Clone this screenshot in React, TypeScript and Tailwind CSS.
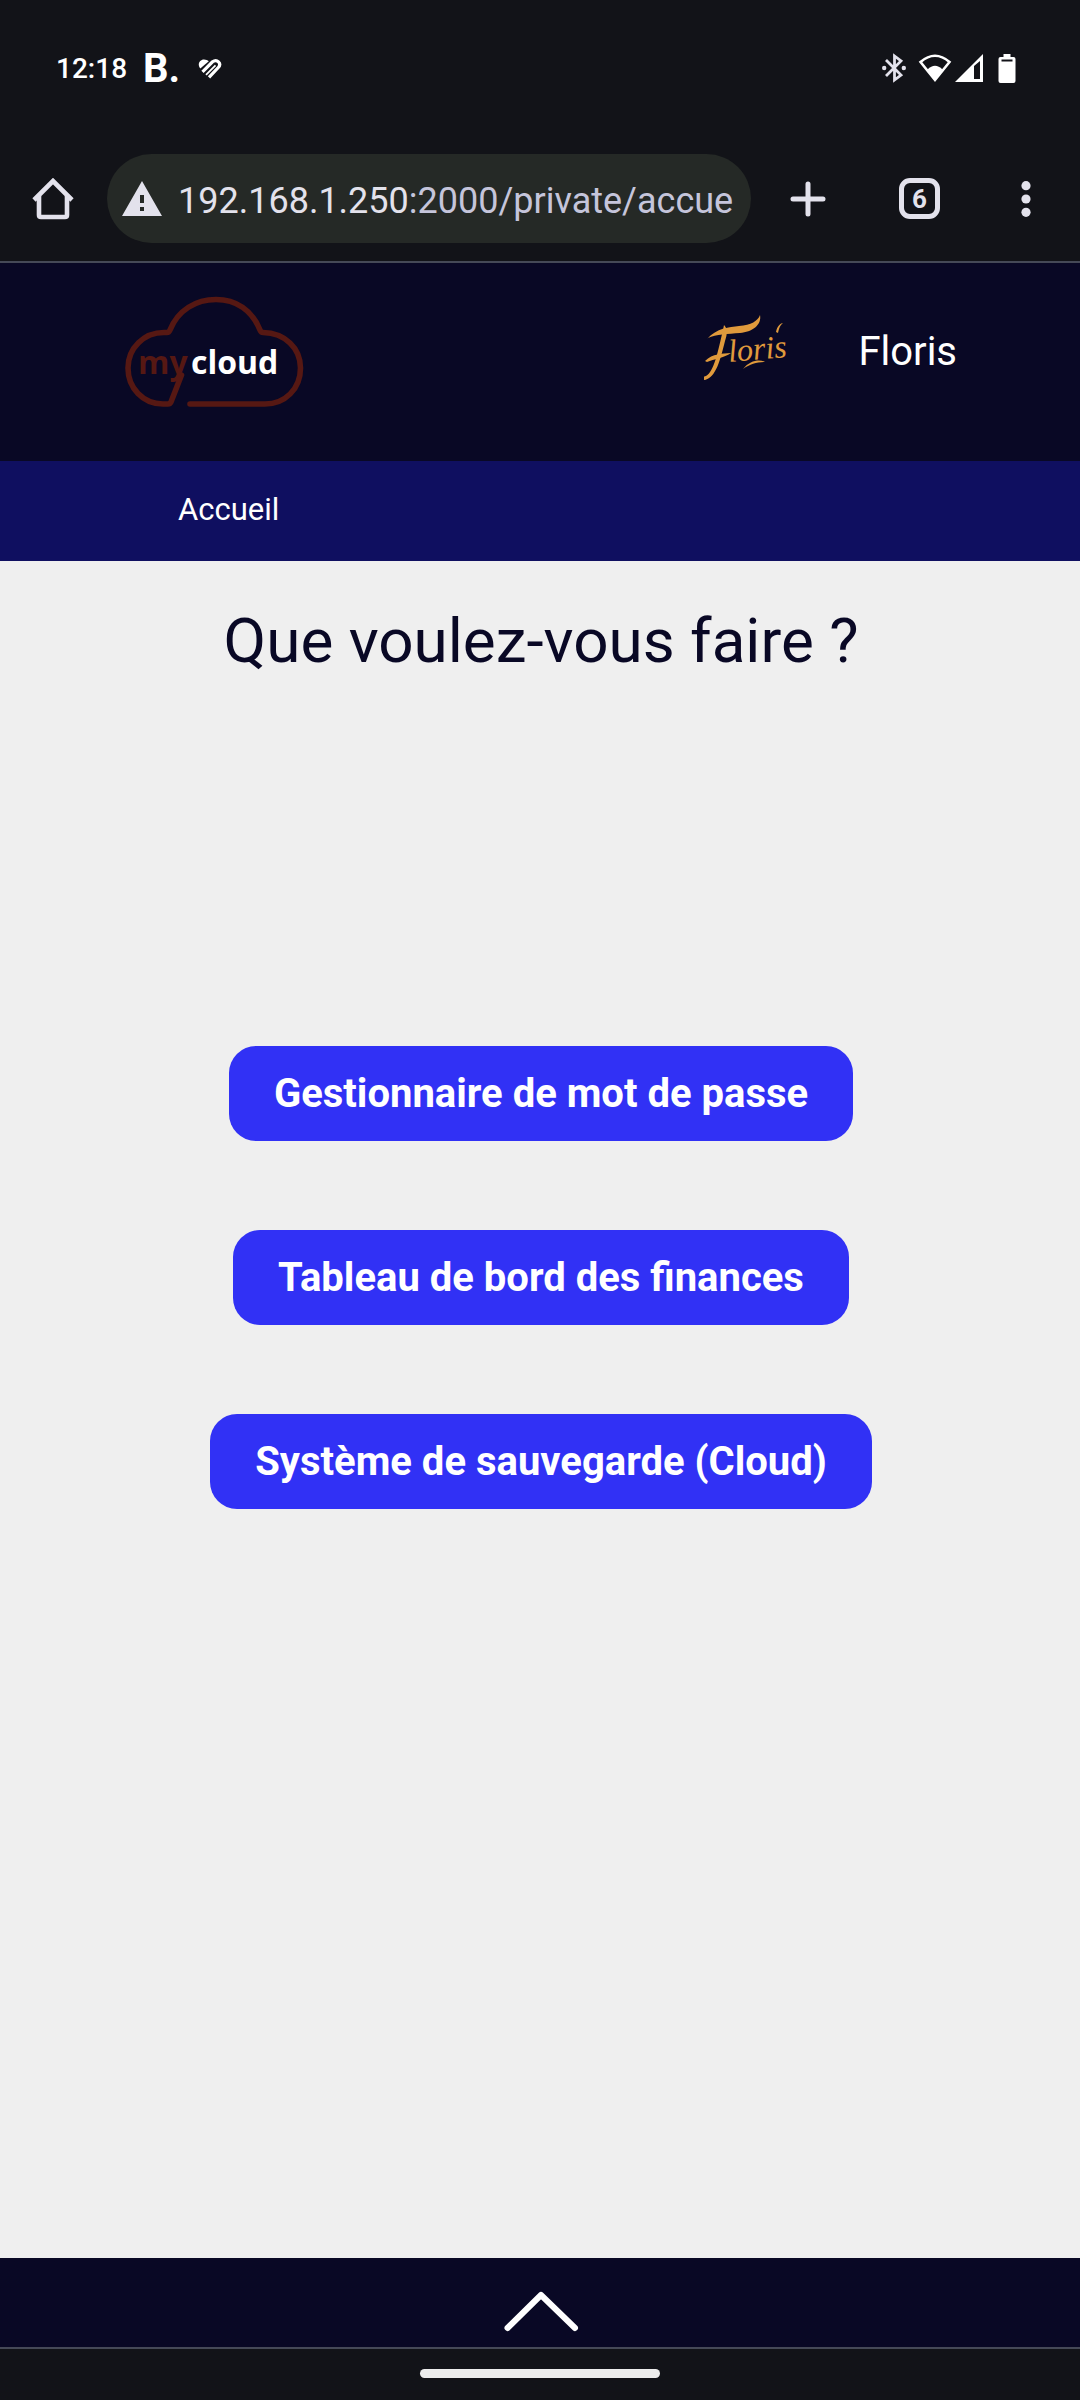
import React from "react";

function StatusBar() {
  return (
    <div className="flex h-[136px] items-center justify-between pl-[56px] pr-[64px] text-white">
      <div className="flex items-center pt-0.5">
        <time className="text-[28px] leading-9 font-medium">12:18</time>
        <span className="ml-4 text-[40px] leading-10 font-bold">B.</span>
        <svg className="ml-[18px] h-6 w-6" viewBox="0 0 24 24" fill="none" stroke="currentColor" aria-hidden="true">
          <path d="M2.300 11.500 C-1 7.500 1.500 2.500 6 2.500 C8 2.500 9.500 3.300 10.800 4.200Z" fill="currentColor" stroke="none" />
          <path d="M4.500 14.800 L14.500 4.800 C19 1.500 24 6.500 20.300 10.500 L11 20.300" strokeWidth="3.200" />
          <path d="M8 17.800 L17.500 8.300" strokeWidth="1.800" />
        </svg>
      </div>
      <div className="flex items-center">
        <svg className="h-[30px] w-[26px]" viewBox="0 0 26 30" fill="none" stroke="#e3e2ec" strokeWidth="2.800" aria-hidden="true">
          <path d="M4 7 L19 22 L12.500 27 V3 L19 8 L4 23" />
          <circle cx="2.200" cy="15" r="2.200" fill="#e3e2ec" stroke="none" />
          <circle cx="21.800" cy="15" r="2.200" fill="#e3e2ec" stroke="none" />
        </svg>
        <svg className="ml-2.5 h-[30px] w-[34px]" viewBox="0 0 34 30" aria-hidden="true">
          <path d="M2.500 9 Q17 -3.500 31.500 9 L17 27Z" fill="none" stroke="#fff" strokeWidth="2.600" />
          <path d="M9.500 16.500 Q17 9 24.500 16.500 L17 27.500Z" fill="#fff" />
        </svg>
        <svg className="ml-0.5 h-[30px] w-[30px]" viewBox="0 0 30 30" aria-hidden="true">
          <path fillRule="evenodd" d="M1 29 L29 1 V29Z M20 13 V26 H26 V8Z" fill="#fff" />
        </svg>
        <svg className="ml-3.5 h-[30px] w-[18px]" viewBox="0 0 18 30" aria-hidden="true">
          <path fillRule="evenodd" d="M5.500 1 H12.500 V4 H15.500 Q17.500 4 17.500 6 V28 Q17.500 30 15.500 30 H2.500 Q.5 30 .5 28 V6 Q.5 4 2.500 4 H5.500Z M3.500 6.500 V8.500 H14.500 V6.500Z" fill="#fff" />
        </svg>
      </div>
    </div>
  );
}

function BrowserToolbar() {
  return (
    <div className="flex h-[127px] items-center border-b-2 border-[#454957] pl-8 pr-[49px] text-[#e3e2ec]">
      <button type="button" aria-label="Page d'accueil" className="shrink-0">
        <svg className="h-[42px] w-[42px]" viewBox="0 0 42 42" fill="none" stroke="currentColor" strokeWidth="4.600" strokeLinejoin="round" aria-hidden="true">
          <path d="M2 22 L21 3 L40 22" strokeLinejoin="miter" />
          <path d="M7 18 V37 Q7 39 9 39 H33 Q35 39 35 37 V18" />
        </svg>
      </button>
      <div className="ml-[33px] flex h-[89px] min-w-0 flex-1 items-center rounded-full bg-[#252926] px-[14px]">
        <svg className="h-9 w-[42px] shrink-0" viewBox="0 0 42 36" aria-hidden="true">
          <path fillRule="evenodd" d="M21 0 L41 35 H1Z M19 14 V22 H23 V14Z M19 26 V30 H23 V26Z" fill="currentColor" />
        </svg>
        <div className="ml-[15px] flex-1 overflow-hidden pt-1 text-[36px] leading-[48px] whitespace-nowrap">
          192.168.1.250<span className="text-[#c5c5db]">:2000/private/accue</span>
        </div>
      </div>
      <button type="button" aria-label="Nouvel onglet" className="ml-[37px] shrink-0">
        <svg className="h-10 w-10" viewBox="0 0 40 40" stroke="currentColor" strokeWidth="5" strokeLinecap="round" aria-hidden="true">
          <path d="M20 5 V35 M5 20 H35" />
        </svg>
      </button>
      <button type="button" aria-label="6 onglets" className="ml-[71px] flex h-[41px] w-[41px] shrink-0 items-center justify-center rounded-[11px] border-[5px] border-current text-[26px] leading-7 font-bold">
        6
      </button>
      <button type="button" aria-label="Menu" className="ml-[81px] shrink-0">
        <svg className="h-10 w-[10px]" viewBox="0 0 10 40" fill="currentColor" aria-hidden="true">
          <circle cx="5" cy="6.700" r="4.600" />
          <circle cx="5" cy="20" r="4.600" />
          <circle cx="5" cy="33.300" r="4.600" />
        </svg>
      </button>
    </div>
  );
}

function CloudLogo() {
  return (
    <svg className="h-28 w-[180px]" viewBox="0 0 180 112" role="img" aria-label="mycloud">
      <g fill="none" stroke="#561813" strokeWidth="5.600" strokeLinecap="round" strokeLinejoin="round">
        <path d="M57.500 80 L47 107 Q46 109 44 109 H39 C19 109 4 93 4 73 C4 53 20 37.500 40 37.500 H43 Q45 37.500 46 35 C54 15 72 4.500 92 4.500 C112 4.500 128 15 136 35 Q137 37.500 139 37.500 C161 38 176.500 53 176.500 73 C176.500 94 161 109 141 109 H66" />
      </g>
      <text x="14" y="79" className="font-['Open_Sans'] text-[32px] font-bold" fill="#561813">
        my<tspan x="67" fill="#fff">cloud</tspan>
      </text>
    </svg>
  );
}

function SignatureLogo() {
  return (
    <svg className="h-[72px] w-[84px]" viewBox="0 0 84 72" role="img" aria-label="Floris">
      <g fill="#e09a3c">
        <path d="M3 24 C13 13 25 12 35 11 C47 10 54 6 56 0 C58 10 48 17 36 18 C24 19 12 19 4 23Z" />
        <path d="M20 10 C23 13 24 17 21 26 C16 46 12 62 1 65 C-2 65 -1 61 2 61 C10 57 14 36 19 15Z" />
        <path d="M1 46 C9 38 18 39 27 38 C20 43 10 44 3 47Z" />
        <path d="M39 54 C46 45 56 44 61 47 C53 47 46 49 39 54Z" />
        <path d="M72 17 C73 11 77 8 79 8 C75 11 75 15 74 18Z" />
      </g>
      <text x="25" y="47" transform="rotate(-5 25 47)" className="font-['Liberation_Serif'] text-[32px] italic" fill="#e09a3c">loris</text>
    </svg>
  );
}

const services = [
  { label: "Gestionnaire de mot de passe", href: "#mots-de-passe" },
  { label: "Tableau de bord des finances", href: "#finances" },
  { label: "Système de sauvegarde (Cloud)", href: "#cloud" },
];

export default function App() {
  return (
    <div className="flex min-h-screen flex-col bg-[#121318] font-[Roboto,sans-serif]">
      <StatusBar />
      <BrowserToolbar />
      <header>
        <div className="flex items-center justify-between bg-[#090825] pt-8 pr-[123px] pb-[54px] pl-[124px]">
          <a href="#accueil"><CloudLogo /></a>
          <a href="#profil" className="flex items-center gap-[70px] text-[40px] leading-[50px] text-white">
            <SignatureLogo />
            <span className="pt-0.5">Floris</span>
          </a>
        </div>
        <nav className="flex h-[100px] items-center bg-[#0f0f60] pb-0.5 pl-[178px]">
          <a href="#accueil" className="text-[31px] leading-9 text-white">Accueil</a>
        </nav>
      </header>
      <main className="flex flex-1 flex-col items-center bg-[#efefef] pt-10 pl-0.5">
        <h1 className="text-[62px] leading-[80px] text-[#090825]">Que voulez-vous faire ?</h1>
        <div className="mt-[365px] flex flex-col items-center gap-[89px]">
          {services.map((service) => (
            <a key={service.href} href={service.href} className="rounded-[27px] bg-[#3131f5] px-[45px] py-6 text-[40px] leading-[47px] font-bold text-white">
              {service.label}
            </a>
          ))}
        </div>
      </main>
      <footer className="flex h-[91px] justify-center border-b-2 border-[#454957] bg-[#090825] pt-8">
        <button type="button" aria-label="Ouvrir le pied de page" className="h-11 text-white">
          <svg className="h-11 w-20" viewBox="0 0 80 44" fill="none" stroke="currentColor" strokeWidth="6" strokeLinecap="round" strokeLinejoin="round" aria-hidden="true">
            <path d="M7.500 38 L41 5 L75 38" />
          </svg>
        </button>
      </footer>
      <div className="flex h-[51px] justify-center pt-5">
        <div className="h-[9px] w-60 rounded-full bg-[#ececec]" />
      </div>
    </div>
  );
}
